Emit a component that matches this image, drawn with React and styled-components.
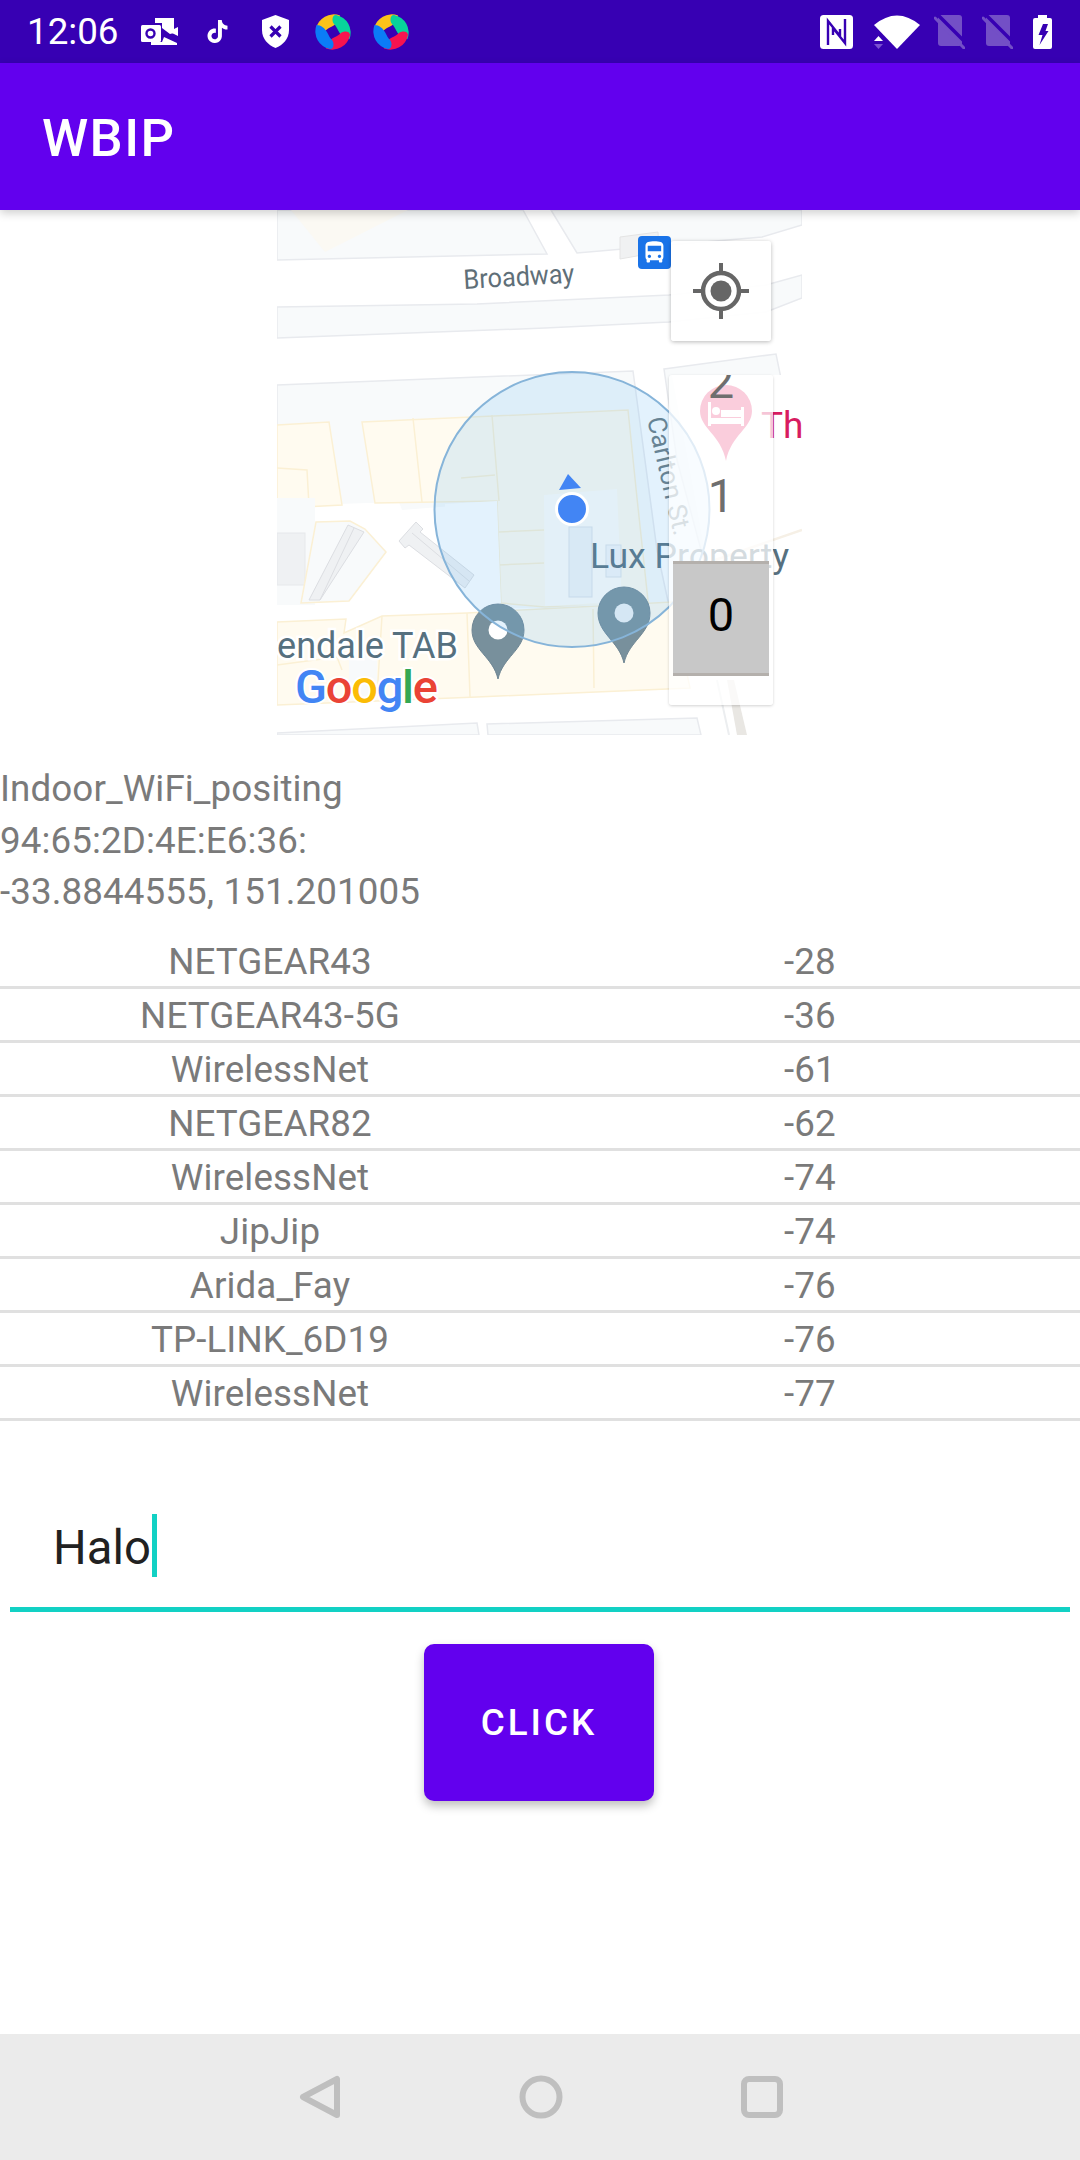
import React from 'react';
import styled, { createGlobalStyle } from 'styled-components';
import { SiTiktok } from 'react-icons/si';

const GlobalStyle = createGlobalStyle`
  html, body {
    margin: 0;
    padding: 0;
    background: #fff;
    font-family: Roboto, "Liberation Sans", sans-serif;
  }
`;

const Phone = styled.div`
  width: 1080px;
  height: 2160px;
  display: flex;
  flex-direction: column;
  overflow: hidden;
`;

const StatusBar = styled.div`
  height: 63px;
  flex: none;
  background: #3700b3;
  display: flex;
  align-items: center;
  justify-content: space-between;
  padding: 0 28px 0 27px;
  box-sizing: border-box;
  color: #fff;
`;

const StatusGroup = styled.div`
  display: flex;
  align-items: center;
`;

const Clock = styled.span`
  font-size: 36.75px;
  width: 103px;
  line-height: 63px;
  white-space: nowrap;
`;

const IconSlot = styled.div`
  width: 58px;
  height: 63px;
  display: flex;
  align-items: center;
  justify-content: center;
`;

const StatusIcon = styled.svg`
  display: block;
  flex: none;
  margin-left: ${p => p.$gap || 0}px;
`;

const AppBar = styled.header`
  height: 147px;
  flex: none;
  background: #6200ee;
  box-shadow: 0 3px 9px rgba(0, 0, 0, 0.2);
  position: relative;
  z-index: 2;
  display: flex;
  align-items: center;
  box-sizing: border-box;
  padding: 2px 0 0 42px;
  color: #fff;
  font-size: 52.5px;
  font-weight: 500;
  letter-spacing: 1.4px;
`;

const Content = styled.main`
  flex: 1;
  display: flex;
  flex-direction: column;
`;

const MapFrame = styled.div`
  position: relative;
  width: 525px;
  height: 525px;
  margin-left: 277px;
  overflow: hidden;
  background: #fff;
`;

const MapDrawing = styled.svg`
  display: block;
`;

const LocateButton = styled.div`
  position: absolute;
  left: 394px;
  top: 31px;
  width: 100px;
  height: 100px;
  border-radius: 3px;
  background: rgba(255, 255, 255, 0.92);
  box-shadow: 0 1px 4px rgba(0, 0, 0, 0.28);
  display: flex;
  align-items: center;
  justify-content: center;
`;

const FloorPanel = styled.div`
  position: absolute;
  left: 392px;
  top: 165px;
  width: 104px;
  height: 330px;
  border-radius: 3px;
  background: rgba(255, 255, 255, 0.75);
  box-shadow: 0 1px 3px rgba(0, 0, 0, 0.18);
  overflow: hidden;
  display: flex;
  flex-direction: column;
  align-items: center;
  justify-content: flex-end;
  padding-bottom: 29px;
  box-sizing: border-box;
`;

const FloorItem = styled.div`
  width: 96px;
  height: ${p => (p.$active ? 115 : 114)}px;
  flex: none;
  box-sizing: border-box;
  display: flex;
  align-items: center;
  justify-content: center;
  font-size: 47px;
  padding-bottom: ${p => (p.$active ? 8 : 17)}px;
  color: ${p => (p.$active ? '#000' : '#6e6e6e')};
  background: ${p => (p.$active ? '#c8c8c8' : 'transparent')};
  border-top: ${p => (p.$active ? '3px solid #b4b0ac' : 'none')};
  border-bottom: ${p => (p.$active ? '3px solid #b4b0ac' : 'none')};
`;

const InfoText = styled.div`
  margin-top: 28px;
  font-size: 36.75px;
  line-height: 51.5px;
  letter-spacing: 0.1px;
  color: #7a7a7a;
`;

const NetworkList = styled.div`
  margin-top: 17px;
`;

const NetworkRow = styled.div`
  height: 54px;
  box-sizing: border-box;
  display: grid;
  grid-template-columns: 1fr 1fr;
  align-items: center;
  text-align: center;
  padding-top: 2px;
  font-size: 36.75px;
  letter-spacing: 0.1px;
  color: #7a7a7a;
  border-bottom: 3px solid #e0e0e0;
`;

const Field = styled.div`
  margin: 93px 10px 0;
  height: 98px;
  box-sizing: border-box;
  border-bottom: 5px solid #12d1c4;
  padding-left: 43px;
  display: flex;
  align-items: flex-start;
  font-size: 47.25px;
  line-height: 68px;
  color: #212121;
`;

const Caret = styled.span`
  width: 5px;
  height: 63px;
  margin-left: 1px;
  background: #12d1c4;
`;

const ClickButton = styled.button`
  display: block;
  width: 230px;
  height: 157px;
  margin: 32px 0 0 424px;
  border: none;
  border-radius: 10px;
  background: #6200ee;
  color: #fff;
  font-family: inherit;
  font-size: 36.75px;
  font-weight: 500;
  letter-spacing: 3px;
  box-shadow: 0 5px 10px rgba(0, 0, 0, 0.25);
`;

const NavBar = styled.nav`
  height: 126px;
  flex: none;
  background: #ebebeb;
  display: flex;
  align-items: center;
  padding-left: 299px;
  gap: 177.5px;
`;

const networks = [
  ['NETGEAR43', '-28'],
  ['NETGEAR43-5G', '-36'],
  ['WirelessNet', '-61'],
  ['NETGEAR82', '-62'],
  ['WirelessNet', '-74'],
  ['JipJip', '-74'],
  ['Arida_Fay', '-76'],
  ['TP-LINK_6D19', '-76'],
  ['WirelessNet', '-77'],
];

function OutlookIcon() {
  return (
    <svg width="37" height="27" viewBox="0 0 37 27">
      <path fill="#fff" d="M14 0H33V15L29 16L21 10V5H14Z" />
      <path fill="#fff" d="M10 27H36V25L23 19L21 24H10Z" />
      <path fill="#fff" d="M37 9V18L28 13.5Z" />
      <rect x="0" y="7" width="20" height="17" rx="1.5" fill="#fff" />
      <circle cx="9.5" cy="15.5" r="4" fill="none" stroke="#3700b3" strokeWidth="2.4" />
    </svg>
  );
}

function ShieldIcon() {
  return (
    <svg width="27" height="33" viewBox="0 0 27 33">
      <path fill="#fff" d="M13.5 0L27 5V15C27 24 21 30 13.5 33C6 30 0 24 0 15V5Z" />
      <path stroke="#3700b3" strokeWidth="3.2" d="M8.5 11.5L18.5 21.5M18.5 11.5L8.5 21.5" />
    </svg>
  );
}

function BallIcon() {
  const petal = 'M1 15A18 18 0 0 1 25 1.5C25 6 22 10 17 12.5C14 14 12 15 10 17C7 19.5 1 19 1 15Z';
  return (
    <svg width="36" height="36" viewBox="0 0 36 36">
      <path d={petal} fill="#fbc21a" />
      <path d={petal} fill="#08d39b" transform="rotate(90 18 18)" />
      <path d={petal} fill="#f7134f" transform="rotate(180 18 18)" />
      <path d={petal} fill="#0b7cf7" transform="rotate(270 18 18)" />
    </svg>
  );
}

function MapContent() {
  const block = '#f8fafb';
  const blockLine = '#e8eaee';
  const yellow = '#fffbf0';
  const yellowLine = '#fbf0d4';
  const inner = '#eff1f3';
  return (
    <MapDrawing width="525" height="525" viewBox="0 0 525 525">
      <rect width="525" height="525" fill="#fff" />

      {/* blocks and road strips */}
      <polygon points="0,0 246,0 270,44 0,50" fill={block} stroke={blockLine} strokeWidth="1.5" />
      <polygon points="14,0 131,0 48,42" fill="#fbf9f3" />
      <polygon points="274,0 300,43 485,27 525,15 525,0" fill={block} stroke={blockLine} strokeWidth="1.5" />
      <polygon points="343,27 381,22 382,42 343,49" fill="#f0f1f2" stroke="#e4e4e4" />
      <polygon points="0,97 200,94 392,85 489,75 525,65 525,88 489,102 392,112 268,118 0,128" fill={block} stroke={blockLine} strokeWidth="1.5" />
      <polygon points="0,175 356,161 380,340 410,480 0,480" fill={block} stroke={blockLine} strokeWidth="1.5" />
      <polygon points="387,159 499,144 525,270 525,420 440,400 400,250" fill={block} stroke={blockLine} strokeWidth="1.5" />
      <polygon points="395,165 525,165 525,525 460,525 420,300" fill="#fff" />
      <polygon points="0,296 122,292 125,300 225,292 225,400 0,400" fill="#fff" />
      <polygon points="0,398 420,398 430,500 0,500" fill="#fff" />

      {/* yellow buildings */}
      <g fill={yellow} stroke={yellowLine} strokeWidth="1.5">
        <polygon points="0,215 52,212 65,295 7,298 0,298" />
        <polygon points="85,212 351,200 360,288 372,400 318,394 268,397 224,393 220,291 98,293" />
        <polygon points="0,412 69,409 67,423 105,406 190,403 395,392 413,478 200,487 0,495" />
      </g>
      <path
        fill="none"
        stroke={yellowLine}
        strokeWidth="1.5"
        d="M0 258L30 260L32 296M136 208L145 292M215 205L222 291M184 268L218 265M222 322L267 320M222 355L267 353M105 406L100 487M190 403L193 487M0 455L60 447L65 460M316 399L317 478"
      />

      {/* pieces that read lighter */}
      <polygon points="168,294 220,291 224,393 190,398 165,340" fill="#fff" />
      <polygon points="267,285 340,279 345,395 268,396" fill="#fff" opacity="0.6" />
      <polygon points="72,440 100,435 100,488 72,488" fill={block} />

      {/* side buildings */}
      <rect x="0" y="288" width="38" height="107" fill={block} />
      <rect x="0" y="323" width="28" height="52" fill={inner} stroke="#e6e8eb" />
      <polygon points="39,312 73,311 88,319 109,342 72,391 24,393" fill={block} stroke={yellowLine} strokeWidth="1.5" />
      <polygon points="71,315 87,322 43,390 32,390" fill={inner} stroke="#dcdee2" />
      <line x1="77" y1="318" x2="43" y2="390" stroke="#dcdee2" />
      <polygon points="139,312 146,319 143,322 197,365 188,378 132,335 128,338 122,331" fill={inner} stroke="#dcdee2" />
      <line x1="135" y1="323" x2="192" y2="371" stroke="#dcdee2" />
      <rect x="292" y="317" width="23" height="70" fill="#f2f4f6" stroke="#dde3e9" />
      <rect x="329" y="335" width="15" height="32" fill="#f4f6f8" stroke="#dde3e9" />

      {/* bottom blocks and right side road */}
      <polygon points="0,523 200,513 202,525 0,525" fill={block} stroke={blockLine} strokeWidth="1.5" />
      <polygon points="210,514 420,508 424,525 211,525" fill={block} stroke={blockLine} strokeWidth="1.5" />
      <polygon points="457,470 470,525 460,525 450,470" fill="#e9e7e3" />
      <line x1="440" y1="470" x2="452" y2="525" stroke="#eceef0" strokeWidth="2" />
      <line x1="438" y1="350" x2="525" y2="320" stroke="#f6f0e6" strokeWidth="2.5" />

      {/* labels */}
      <text x="187" y="79" transform="rotate(-3.4 187 79)" fontFamily="Roboto, sans-serif" fontSize="27" fill="#5f6f78" textLength="111" lengthAdjust="spacingAndGlyphs">Broadway</text>
      <text x="370" y="209" transform="rotate(77 370 209)" fontFamily="Roboto, sans-serif" fontSize="26" fill="#68787f">Carlton St.</text>
      <text x="313" y="358" fontFamily="Roboto, sans-serif" fontSize="35.6" fill="#56707f">Lux Property</text>
      <text x="181" y="448" textAnchor="end" fontFamily="Roboto, sans-serif" fontSize="36" fill="#56707f" stroke="#fff" strokeWidth="5" paintOrder="stroke">Chippendale TAB</text>
      <text x="484" y="228" fontFamily="Roboto, sans-serif" fontSize="37" fill="#d81b60">Th</text>

      {/* hotel pin */}
      <path d="M449 251C444 225 423 218 423 201A26 26 0 0 1 475 201C475 218 454 225 449 251Z" fill="#e93b76" />
      <g fill="#fff">
        <rect x="431" y="192" width="3" height="24" />
        <rect x="431" y="208" width="36" height="6" />
        <rect x="464" y="197" width="3" height="19" />
        <circle cx="439" cy="201" r="4" />
        <rect x="444" y="200" width="20" height="7" />
      </g>

      {/* grey place pins */}
      <g fill="#78909c" stroke="#6f8694" strokeWidth="1">
        <path d="M221 469C216 447 195 440 195 420A26 26 0 0 1 247 420C247 440 226 447 221 469Z" />
        <path d="M347 453C342 431 321 424 321 403A26 26 0 0 1 373 403C373 424 352 431 347 453Z" />
      </g>
      <circle cx="221" cy="420" r="9.5" fill="#fff" />
      <circle cx="347" cy="403" r="9.5" fill="#eef2f5" />

      {/* accuracy circle and position dot */}
      <circle cx="295" cy="299.5" r="137.5" fill="rgba(100,181,246,0.18)" stroke="#86b4d9" strokeWidth="2" />
      <polygon points="291,264 282,280 304,278" fill="#4285f4" />
      <circle cx="295" cy="299" r="15.5" fill="#4285f4" stroke="#fff" strokeWidth="3" />

      {/* bus stop */}
      <rect x="361" y="26" width="33" height="33" rx="4" fill="#1a73e8" />
      <path transform="translate(364 29) scale(1.12)" fill="#fff" d="M4 16c0 .88.39 1.67 1 2.22V20c0 .55.45 1 1 1h1c.55 0 1-.45 1-1v-1h8v1c0 .55.45 1 1 1h1c.55 0 1-.45 1-1v-1.78c.61-.55 1-1.34 1-2.22V6c0-3.5-3.58-4-8-4s-8 .5-8 4v10zm3.5 1c-.83 0-1.5-.67-1.5-1.5S6.67 14 7.5 14s1.5.67 1.5 1.5S8.33 17 7.5 17zm9 0c-.83 0-1.5-.67-1.5-1.5s.67-1.5 1.5-1.5 1.5.67 1.5 1.5-.67 1.5-1.5 1.5zm1.5-6H6V6h12v5z" />

      {/* google logo */}
      <text x="18" y="493" fontFamily="Roboto, sans-serif" fontWeight="500" fontSize="47" stroke="#fff" strokeWidth="4" paintOrder="stroke" textLength="143">
        <tspan fill="#4285f4">G</tspan>
        <tspan fill="#ea4335">o</tspan>
        <tspan fill="#fbbc05">o</tspan>
        <tspan fill="#4285f4">g</tspan>
        <tspan fill="#34a853">l</tspan>
        <tspan fill="#ea4335">e</tspan>
      </text>
    </MapDrawing>
  );
}

export default function App() {
  return (
    <Phone>
      <GlobalStyle />
      <StatusBar>
        <StatusGroup>
          <Clock>12:06</Clock>
          <IconSlot><OutlookIcon /></IconSlot>
          <IconSlot><SiTiktok size={23} color="#fff" /></IconSlot>
          <IconSlot><ShieldIcon /></IconSlot>
          <IconSlot><BallIcon /></IconSlot>
          <IconSlot><BallIcon /></IconSlot>
        </StatusGroup>
        <StatusGroup>
          <StatusIcon width="33" height="34" viewBox="0 0 33 34">
            <rect width="33" height="34" rx="3.5" fill="#fff" />
            <path fill="none" stroke="#3700b3" strokeWidth="2.4" d="M8 30V6L20 21V14M25 4V28L13 13V20" />
          </StatusIcon>
          <StatusIcon $gap={21} width="46" height="34" viewBox="0 0 46 34">
            <path fill="#fff" d="M0 10Q23 -9 46 10L23 34Z" />
            <path fill="#fff" d="M0 26L4.5 21L9 26Z" />
            <path fill="#7a50d0" d="M0 29L9 29L4.5 34Z" />
          </StatusIcon>
          {[14, 17].map(gap => (
            <StatusIcon key={gap} $gap={gap} width="31" height="34" viewBox="0 0 31 34">
              <path fill="#734fc6" d="M7 0H25A3 3 0 0 1 28 3V28A3 3 0 0 1 25 31H7A3 3 0 0 1 4 28V3A3 3 0 0 1 7 0Z" />
              <line x1="4" y1="0" x2="35" y2="31" stroke="#3700b3" strokeWidth="3.5" />
              <line x1="1" y1="3" x2="30" y2="33" stroke="#734fc6" strokeWidth="3" strokeLinecap="round" />
            </StatusIcon>
          ))}
          <StatusIcon $gap={20} width="19" height="34" viewBox="0 0 19 34">
            <path fill="#fff" d="M5 0H14V3H17A2 2 0 0 1 19 5V32A2 2 0 0 1 17 34H2A2 2 0 0 1 0 32V5A2 2 0 0 1 2 3H5Z" />
            <path fill="#3700b3" d="M10 9H15L12.5 16H15.5L6.5 30L9.5 20H5.5Z" />
          </StatusIcon>
        </StatusGroup>
      </StatusBar>

      <AppBar>WBIP</AppBar>

      <Content>
        <MapFrame>
          <MapContent />
          <LocateButton>
            <svg width="58" height="58" viewBox="0 0 58 58">
              <circle cx="29" cy="29" r="18" fill="none" stroke="#666" strokeWidth="4.5" />
              <circle cx="29" cy="29" r="10.5" fill="#666" />
              <path stroke="#666" strokeWidth="4" d="M29 1V11M29 47V57M1 29H11M47 29H57" />
            </svg>
          </LocateButton>
          <FloorPanel>
            <FloorItem>2</FloorItem>
            <FloorItem>1</FloorItem>
            <FloorItem $active>0</FloorItem>
          </FloorPanel>
        </MapFrame>

        <InfoText>
          Indoor_WiFi_positing<br />
          94:65:2D:4E:E6:36:<br />
          -33.8844555, 151.201005
        </InfoText>

        <NetworkList>
          {networks.map(([name, level], i) => (
            <NetworkRow key={i}>
              <span>{name}</span>
              <span>{level}</span>
            </NetworkRow>
          ))}
        </NetworkList>

        <Field>
          Halo
          <Caret />
        </Field>

        <ClickButton>CLICK</ClickButton>
      </Content>

      <NavBar>
        <svg width="42" height="44" viewBox="0 0 42 44">
          <path fill="none" stroke="#bfbfbf" strokeWidth="6" strokeLinejoin="round" d="M38 4V40L4 22Z" />
        </svg>
        <svg width="44" height="44" viewBox="0 0 44 44">
          <circle cx="22" cy="22" r="18.5" fill="none" stroke="#bfbfbf" strokeWidth="6" />
        </svg>
        <svg width="44" height="44" viewBox="0 0 44 44">
          <rect x="4" y="4" width="36" height="36" rx="5" fill="none" stroke="#bfbfbf" strokeWidth="6" />
        </svg>
      </NavBar>
    </Phone>
  );
}
